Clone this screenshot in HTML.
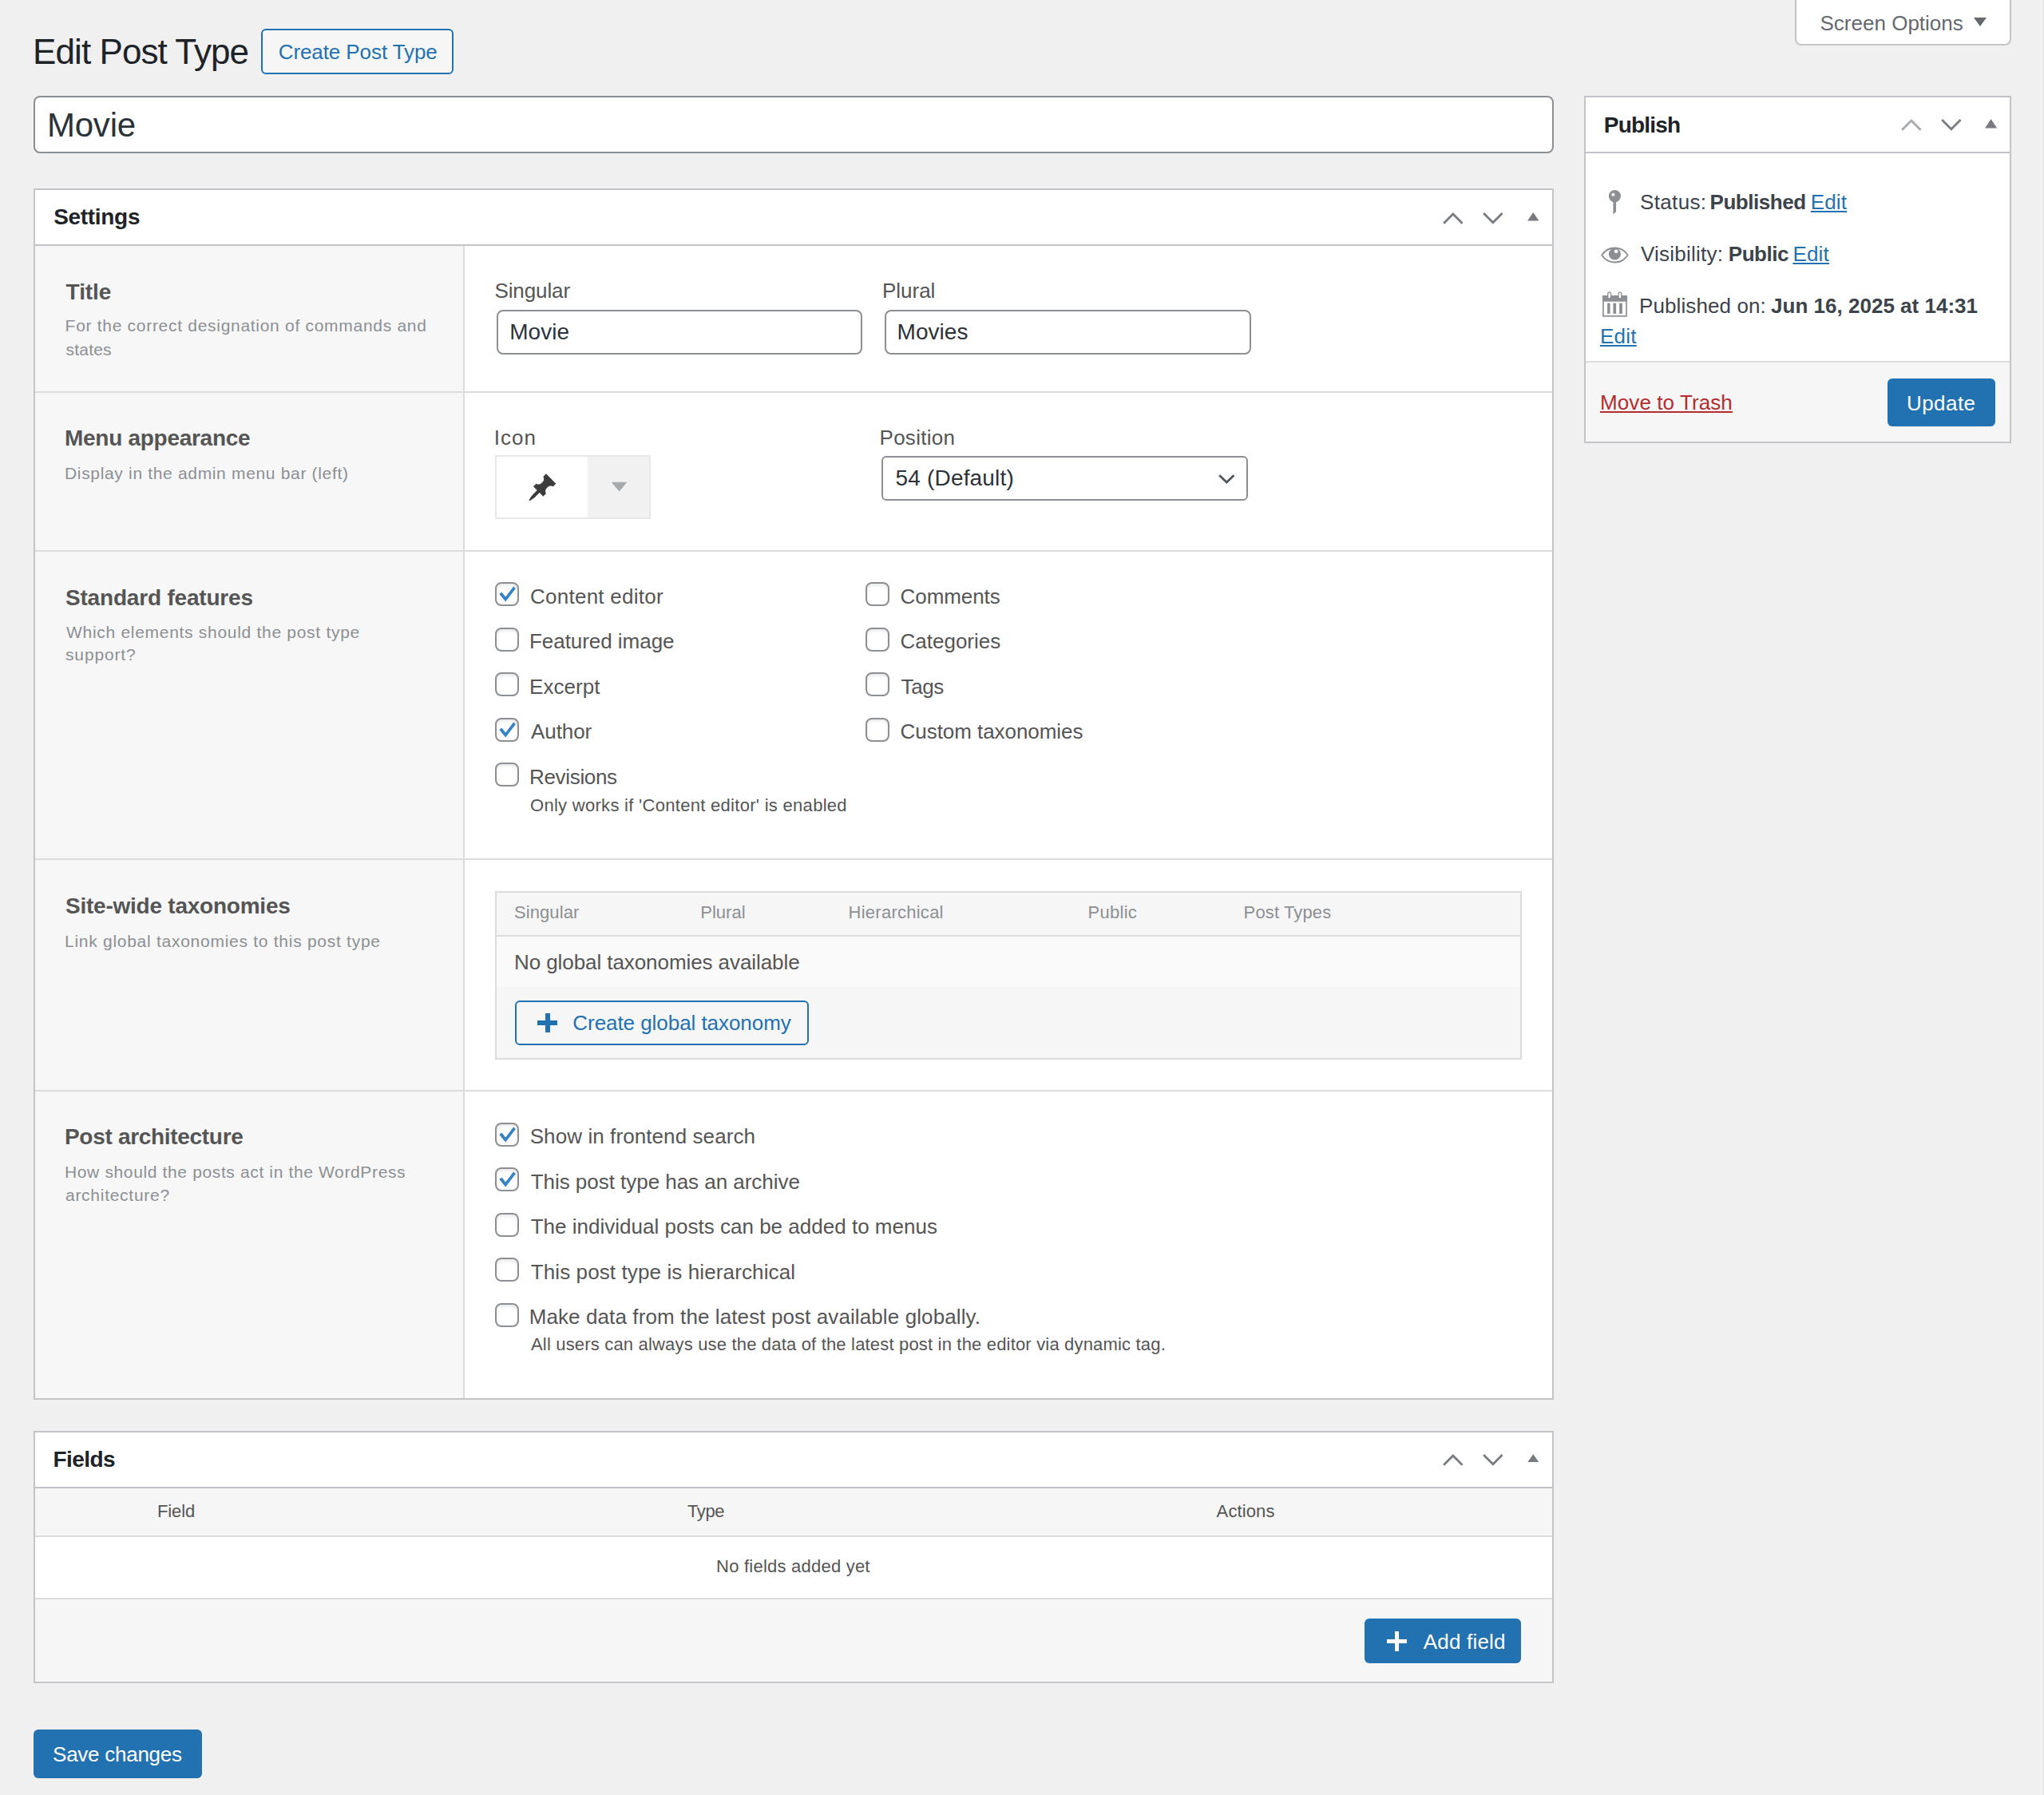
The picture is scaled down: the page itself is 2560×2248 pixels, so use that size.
<!DOCTYPE html>
<html><head><meta charset="utf-8"><title>Edit Post Type</title>
<style>
html,body{margin:0;padding:0;}
body{width:2560px;height:2248px;background:#f0f0f1;position:relative;overflow:hidden;font-family:"Liberation Sans",sans-serif;}
.t{position:absolute;white-space:nowrap;line-height:1;}
.b{position:absolute;box-sizing:border-box;}
a{color:#2271b1;}
@media (max-width:1300px){body{zoom:0.5;}}
</style></head><body>
<div class="t" id="t0" style="left:41.10px;top:42.85px;font-size:44px;color:#1d2327;font-weight:400;letter-spacing:-0.925px;">Edit Post Type</div>
<div class="b" style="left:327px;top:36px;width:241px;height:57px;border:2px solid #2271b1;border-radius:6px;background:#f6f6f6;"></div>
<div class="t" id="t1" style="left:348.70px;top:52.29px;font-size:26px;color:#2271b1;font-weight:400;letter-spacing:-0.087px;">Create Post Type</div>
<div class="b" style="left:2248px;top:-10px;width:271px;height:67px;border:2px solid #c3c4c7;border-top:none;border-radius:0 0 8px 8px;background:#fff;"></div>
<div class="t" id="t2" style="left:2279.50px;top:15.59px;font-size:26px;color:#646970;font-weight:400;letter-spacing:0.006px;">Screen Options</div>
<svg class="b" style="left:2470px;top:20px" width="20" height="16" viewBox="0 0 20 16"><path d="M2 2 L18 2 L10 13 Z" fill="#646970"/></svg>
<div class="b" style="left:42px;top:120px;width:1904px;height:72px;border:2px solid #8c8f94;border-radius:8px;background:#fff;"></div>
<div class="t" id="t3" style="left:59.00px;top:136.24px;font-size:42px;color:#2c3338;font-weight:400;letter-spacing:-0.239px;">Movie</div>
<div class="b" style="left:42px;top:236px;width:1904px;height:1517px;border:2px solid #c3c4c7;background:#fff;"></div>
<div class="b" style="left:44px;top:306px;width:1900px;height:2px;background:#c3c4c7;"></div>
<div class="t" id="t4" style="left:67.20px;top:258.29px;font-size:28px;color:#1d2327;font-weight:700;letter-spacing:-0.309px;">Settings</div>
<svg class="b" style="left:1807px;top:266.3px" width="26" height="15" viewBox="0 0 26 15"><path d="M1.15 13.7 L12.85 2 L24.55 13.7" stroke="#787c82" stroke-width="2.8" fill="none"/></svg>
<svg class="b" style="left:1856.6px;top:266.3px" width="26" height="15" viewBox="0 0 26 15"><path d="M1.15 1 L12.85 12.7 L24.55 1" stroke="#787c82" stroke-width="2.8" fill="none"/></svg>
<svg class="b" style="left:1912.8px;top:266.3px" width="14.5" height="10.6" viewBox="0 0 14.5 10.6"><path d="M0 10.6 L14.5 10.6 L7.25 0 Z" fill="#787c82"/></svg>
<div class="b" style="left:44px;top:308px;width:536px;height:1443px;background:#f7f7f7;"></div>
<div class="b" style="left:580px;top:308px;width:2px;height:1443px;background:#dcdcde;"></div>
<div class="b" style="left:44px;top:490px;width:1900px;height:2px;background:#dcdcde;"></div>
<div class="b" style="left:44px;top:689px;width:1900px;height:2px;background:#dcdcde;"></div>
<div class="b" style="left:44px;top:1075px;width:1900px;height:2px;background:#dcdcde;"></div>
<div class="b" style="left:44px;top:1365px;width:1900px;height:2px;background:#dcdcde;"></div>
<div class="t" id="t5" style="left:82.60px;top:351.79px;font-size:28px;color:#555555;font-weight:700;letter-spacing:-0.066px;">Title</div>
<div class="t" id="t6" style="left:81.60px;top:397.42px;font-size:21px;color:#8c8f94;font-weight:400;letter-spacing:0.708px;">For the correct designation of commands and</div>
<div class="t" id="t7" style="left:82.60px;top:427.12px;font-size:21px;color:#8c8f94;font-weight:400;letter-spacing:0.174px;">states</div>
<div class="t" id="t8" style="left:619.40px;top:350.99px;font-size:26px;color:#555555;font-weight:400;letter-spacing:-0.099px;">Singular</div>
<div class="t" id="t9" style="left:1105.00px;top:350.99px;font-size:26px;color:#555555;font-weight:400;letter-spacing:-0.016px;">Plural</div>
<div class="b" style="left:622px;top:388px;width:458px;height:56px;border:2px solid #8c8f94;border-radius:8px;background:#fff;"></div>
<div class="t" id="t10" style="left:638.20px;top:401.89px;font-size:28px;color:#2c3338;font-weight:400;letter-spacing:0.024px;">Movie</div>
<div class="b" style="left:1108px;top:388px;width:459px;height:56px;border:2px solid #8c8f94;border-radius:8px;background:#fff;"></div>
<div class="t" id="t11" style="left:1123.60px;top:401.89px;font-size:28px;color:#2c3338;font-weight:400;letter-spacing:0.039px;">Movies</div>
<div class="t" id="t12" style="left:81.00px;top:535.49px;font-size:28px;color:#555555;font-weight:700;letter-spacing:-0.280px;">Menu appearance</div>
<div class="t" id="t13" style="left:81.00px;top:581.82px;font-size:21px;color:#8c8f94;font-weight:400;letter-spacing:0.669px;">Display in the admin menu bar (left)</div>
<div class="t" id="t14" style="left:618.80px;top:534.79px;font-size:26px;color:#555555;font-weight:400;letter-spacing:1.020px;">Icon</div>
<div class="b" style="left:620px;top:570px;width:118px;height:80px;border:2px solid #e8e8e8;border-right:2px solid #e8e8e8;background:#fff;"></div>
<div class="b" style="left:736px;top:570px;width:79px;height:80px;border:2px solid #e8e8e8;border-left:none;background:#f1f1f1;"></div>
<svg class="b" style="left:660px;top:591px" width="39" height="39" viewBox="0 0 20 20"><path fill="#3c3c3c" d="M10.44 3.02l1.82-1.82 6.36 6.35-1.83 1.82c-1.05-.68-2.48-.57-3.41.36l-.75.75c-.92.93-1.04 2.35-.35 3.41l-1.83 1.82-2.41-2.41-2.8 2.79c-.42.42-3.38 2.71-3.8 2.29s1.86-3.39 2.28-3.81l2.79-2.79L4.1 9.36l1.83-1.82c1.05.69 2.48.57 3.4-.36l.75-.75c.93-.92 1.05-2.35.36-3.41z"/></svg>
<svg class="b" style="left:766px;top:603px" width="20" height="14" viewBox="0 0 20 14"><path d="M0.6 1.2 L18.5 1.2 L9.55 12 Z" fill="#a7aaad" stroke="#a7aaad" stroke-width="1" stroke-linejoin="round"/></svg>
<div class="t" id="t15" style="left:1101.50px;top:534.79px;font-size:26px;color:#555555;font-weight:400;letter-spacing:0.285px;">Position</div>
<div class="b" style="left:1104px;top:571px;width:459px;height:56px;border:2px solid #8c8f94;border-radius:6px;background:#fff;"></div>
<div class="t" id="t16" style="left:1121.50px;top:584.59px;font-size:28px;color:#2c3338;font-weight:400;letter-spacing:0.182px;">54 (Default)</div>
<svg class="b" style="left:1526px;top:594px" width="21" height="12" viewBox="0 0 21 12"><path d="M1.2 1.2 L10.3 10 L19.4 1.2" stroke="#50575e" stroke-width="2.8" fill="none"/></svg>
<div class="t" id="t17" style="left:82.00px;top:734.59px;font-size:28px;color:#555555;font-weight:700;letter-spacing:-0.193px;">Standard features</div>
<div class="t" id="t18" style="left:83.00px;top:780.92px;font-size:21px;color:#8c8f94;font-weight:400;letter-spacing:0.706px;">Which elements should the post type</div>
<div class="t" id="t19" style="left:82.00px;top:809.42px;font-size:21px;color:#8c8f94;font-weight:400;letter-spacing:0.853px;">support?</div>
<div class="b" style="left:620px;top:729.25px;width:30px;height:30.0px;border:2px solid #8c8f94;border-radius:8px;background:#fff;box-shadow:inset 0 2px 4px rgba(0,0,0,.1);"></div>
<svg class="b" style="left:620px;top:729.25px" width="30" height="30" viewBox="0 0 30 30"><path d="M5.3 14.9 L8.4 12.4 L13.2 18.4 L23.1 5.6 L25.9 8.1 L13.2 24.4 Z" fill="#3582c4"/></svg>
<div class="t" id="t20" style="left:664.00px;top:733.94px;font-size:26px;color:#555555;font-weight:400;letter-spacing:0.251px;">Content editor</div>
<div class="b" style="left:620px;top:785.71px;width:30px;height:30.0px;border:2px solid #8c8f94;border-radius:8px;background:#fff;box-shadow:inset 0 2px 4px rgba(0,0,0,.1);"></div>
<div class="t" id="t21" style="left:663.00px;top:790.40px;font-size:26px;color:#555555;font-weight:400;letter-spacing:-0.046px;">Featured image</div>
<div class="b" style="left:620px;top:842.17px;width:30px;height:30.0px;border:2px solid #8c8f94;border-radius:8px;background:#fff;box-shadow:inset 0 2px 4px rgba(0,0,0,.1);"></div>
<div class="t" id="t22" style="left:663.00px;top:846.86px;font-size:26px;color:#555555;font-weight:400;letter-spacing:0.060px;">Excerpt</div>
<div class="b" style="left:620px;top:898.63px;width:30px;height:30.0px;border:2px solid #8c8f94;border-radius:8px;background:#fff;box-shadow:inset 0 2px 4px rgba(0,0,0,.1);"></div>
<svg class="b" style="left:620px;top:898.63px" width="30" height="30" viewBox="0 0 30 30"><path d="M5.3 14.9 L8.4 12.4 L13.2 18.4 L23.1 5.6 L25.9 8.1 L13.2 24.4 Z" fill="#3582c4"/></svg>
<div class="t" id="t23" style="left:665.00px;top:903.32px;font-size:26px;color:#555555;font-weight:400;letter-spacing:-0.079px;">Author</div>
<div class="b" style="left:620px;top:955.09px;width:30px;height:30.0px;border:2px solid #8c8f94;border-radius:8px;background:#fff;box-shadow:inset 0 2px 4px rgba(0,0,0,.1);"></div>
<div class="t" id="t24" style="left:663.00px;top:959.78px;font-size:26px;color:#555555;font-weight:400;letter-spacing:-0.326px;">Revisions</div>
<div class="b" style="left:1084px;top:729.25px;width:30px;height:30.0px;border:2px solid #8c8f94;border-radius:8px;background:#fff;box-shadow:inset 0 2px 4px rgba(0,0,0,.1);"></div>
<div class="t" id="t25" style="left:1127.60px;top:733.94px;font-size:26px;color:#555555;font-weight:400;letter-spacing:-0.087px;">Comments</div>
<div class="b" style="left:1084px;top:785.71px;width:30px;height:30.0px;border:2px solid #8c8f94;border-radius:8px;background:#fff;box-shadow:inset 0 2px 4px rgba(0,0,0,.1);"></div>
<div class="t" id="t26" style="left:1127.60px;top:790.40px;font-size:26px;color:#555555;font-weight:400;letter-spacing:-0.015px;">Categories</div>
<div class="b" style="left:1084px;top:842.17px;width:30px;height:30.0px;border:2px solid #8c8f94;border-radius:8px;background:#fff;box-shadow:inset 0 2px 4px rgba(0,0,0,.1);"></div>
<div class="t" id="t27" style="left:1128.60px;top:846.86px;font-size:26px;color:#555555;font-weight:400;letter-spacing:-0.437px;">Tags</div>
<div class="b" style="left:1084px;top:898.63px;width:30px;height:30.0px;border:2px solid #8c8f94;border-radius:8px;background:#fff;box-shadow:inset 0 2px 4px rgba(0,0,0,.1);"></div>
<div class="t" id="t28" style="left:1127.60px;top:903.32px;font-size:26px;color:#555555;font-weight:400;letter-spacing:-0.060px;">Custom taxonomies</div>
<div class="t" id="t29" style="left:664.00px;top:998.07px;font-size:22px;color:#555555;font-weight:400;letter-spacing:0.289px;">Only works if 'Content editor' is enabled</div>
<div class="t" id="t30" style="left:82.00px;top:1121.09px;font-size:28px;color:#555555;font-weight:700;letter-spacing:-0.237px;">Site-wide taxonomies</div>
<div class="t" id="t31" style="left:81.00px;top:1167.82px;font-size:21px;color:#8c8f94;font-weight:400;letter-spacing:0.729px;">Link global taxonomies to this post type</div>
<div class="b" style="left:620px;top:1116px;width:1286px;height:211px;border:2px solid #dcdcde;background:#f6f6f6;"></div>
<div class="b" style="left:622px;top:1171px;width:1282px;height:2px;background:#dcdcde;"></div>
<div class="b" style="left:622px;top:1173px;width:1282px;height:63px;background:#fafafa;"></div>
<div class="t" id="t32" style="left:643.90px;top:1132.27px;font-size:22px;color:#8c8f94;font-weight:400;letter-spacing:0.112px;">Singular</div>
<div class="t" id="t33" style="left:877.20px;top:1132.27px;font-size:22px;color:#8c8f94;font-weight:400;letter-spacing:0.029px;">Plural</div>
<div class="t" id="t34" style="left:1062.60px;top:1132.27px;font-size:22px;color:#8c8f94;font-weight:400;letter-spacing:0.251px;">Hierarchical</div>
<div class="t" id="t35" style="left:1362.50px;top:1132.27px;font-size:22px;color:#8c8f94;font-weight:400;letter-spacing:0.274px;">Public</div>
<div class="t" id="t36" style="left:1557.60px;top:1132.27px;font-size:22px;color:#8c8f94;font-weight:400;letter-spacing:0.129px;">Post Types</div>
<div class="t" id="t37" style="left:644.00px;top:1191.69px;font-size:26px;color:#555555;font-weight:400;letter-spacing:-0.079px;">No global taxonomies available</div>
<div class="b" style="left:645px;top:1253px;width:368px;height:56px;border:2px solid #2271b1;border-radius:6px;background:#f6f6f6;"></div>
<div class="b" style="left:673px;top:1278px;width:25px;height:6px;background:#2271b1;"></div>
<div class="b" style="left:683px;top:1269px;width:6px;height:24px;background:#2271b1;"></div>
<div class="t" id="t38" style="left:717.30px;top:1268.29px;font-size:26px;color:#2271b1;font-weight:400;letter-spacing:-0.053px;">Create global taxonomy</div>
<div class="t" id="t39" style="left:81.00px;top:1410.29px;font-size:28px;color:#555555;font-weight:700;letter-spacing:-0.308px;">Post architecture</div>
<div class="t" id="t40" style="left:81.00px;top:1456.52px;font-size:21px;color:#8c8f94;font-weight:400;letter-spacing:0.636px;">How should the posts act in the WordPress</div>
<div class="t" id="t41" style="left:82.00px;top:1485.82px;font-size:21px;color:#8c8f94;font-weight:400;letter-spacing:0.725px;">architecture?</div>
<div class="b" style="left:620px;top:1405.5px;width:30px;height:30.0px;border:2px solid #8c8f94;border-radius:8px;background:#fff;box-shadow:inset 0 2px 4px rgba(0,0,0,.1);"></div>
<svg class="b" style="left:620px;top:1405.5px" width="30" height="30" viewBox="0 0 30 30"><path d="M5.3 14.9 L8.4 12.4 L13.2 18.4 L23.1 5.6 L25.9 8.1 L13.2 24.4 Z" fill="#3582c4"/></svg>
<div class="t" id="t42" style="left:663.70px;top:1409.99px;font-size:26px;color:#555555;font-weight:400;letter-spacing:0.087px;">Show in frontend search</div>
<div class="b" style="left:620px;top:1462.1px;width:30px;height:30.0px;border:2px solid #8c8f94;border-radius:8px;background:#fff;box-shadow:inset 0 2px 4px rgba(0,0,0,.1);"></div>
<svg class="b" style="left:620px;top:1462.1px" width="30" height="30" viewBox="0 0 30 30"><path d="M5.3 14.9 L8.4 12.4 L13.2 18.4 L23.1 5.6 L25.9 8.1 L13.2 24.4 Z" fill="#3582c4"/></svg>
<div class="t" id="t43" style="left:664.70px;top:1466.59px;font-size:26px;color:#555555;font-weight:400;letter-spacing:-0.035px;">This post type has an archive</div>
<div class="b" style="left:620px;top:1518.7px;width:30px;height:30.0px;border:2px solid #8c8f94;border-radius:8px;background:#fff;box-shadow:inset 0 2px 4px rgba(0,0,0,.1);"></div>
<div class="t" id="t44" style="left:664.70px;top:1523.19px;font-size:26px;color:#555555;font-weight:400;letter-spacing:0.011px;">The individual posts can be added to menus</div>
<div class="b" style="left:620px;top:1575.3px;width:30px;height:30.0px;border:2px solid #8c8f94;border-radius:8px;background:#fff;box-shadow:inset 0 2px 4px rgba(0,0,0,.1);"></div>
<div class="t" id="t45" style="left:664.70px;top:1579.79px;font-size:26px;color:#555555;font-weight:400;letter-spacing:0.113px;">This post type is hierarchical</div>
<div class="b" style="left:620px;top:1631.9px;width:30px;height:30.0px;border:2px solid #8c8f94;border-radius:8px;background:#fff;box-shadow:inset 0 2px 4px rgba(0,0,0,.1);"></div>
<div class="t" id="t46" style="left:662.70px;top:1636.39px;font-size:26px;color:#555555;font-weight:400;letter-spacing:0.101px;">Make data from the latest post available globally.</div>
<div class="t" id="t47" style="left:665.00px;top:1672.87px;font-size:22px;color:#555555;font-weight:400;letter-spacing:0.178px;">All users can always use the data of the latest post in the editor via dynamic tag.</div>
<div class="b" style="left:42px;top:1792px;width:1904px;height:316px;border:2px solid #c3c4c7;background:#fff;"></div>
<div class="b" style="left:44px;top:1862px;width:1900px;height:2px;background:#c3c4c7;"></div>
<div class="t" id="t48" style="left:66.50px;top:1814.29px;font-size:28px;color:#1d2327;font-weight:700;letter-spacing:-0.564px;">Fields</div>
<svg class="b" style="left:1807px;top:1820.5px" width="26" height="15" viewBox="0 0 26 15"><path d="M1.15 13.7 L12.85 2 L24.55 13.7" stroke="#787c82" stroke-width="2.8" fill="none"/></svg>
<svg class="b" style="left:1856.6px;top:1820.5px" width="26" height="15" viewBox="0 0 26 15"><path d="M1.15 1 L12.85 12.7 L24.55 1" stroke="#787c82" stroke-width="2.8" fill="none"/></svg>
<svg class="b" style="left:1912.8px;top:1820.5px" width="14.5" height="10.6" viewBox="0 0 14.5 10.6"><path d="M0 10.6 L14.5 10.6 L7.25 0 Z" fill="#787c82"/></svg>
<div class="b" style="left:44px;top:1864px;width:1900px;height:59px;background:#f6f6f6;"></div>
<div class="b" style="left:44px;top:1923px;width:1900px;height:2px;background:#dcdcde;"></div>
<div class="b" style="left:44px;top:2001px;width:1900px;height:2px;background:#dcdcde;"></div>
<div class="b" style="left:44px;top:2003px;width:1900px;height:103px;background:#f6f6f6;"></div>
<div class="t" id="t49" style="left:196.90px;top:1882.17px;font-size:22px;color:#555555;font-weight:400;letter-spacing:-0.099px;">Field</div>
<div class="t" id="t50" style="left:860.90px;top:1882.17px;font-size:22px;color:#555555;font-weight:400;letter-spacing:-0.332px;">Type</div>
<div class="t" id="t51" style="left:1523.60px;top:1882.17px;font-size:22px;color:#555555;font-weight:400;letter-spacing:0.110px;">Actions</div>
<div class="t" id="t52" style="left:897.10px;top:1951.17px;font-size:22px;color:#555555;font-weight:400;letter-spacing:0.225px;">No fields added yet</div>
<div class="b" style="left:1709px;top:2027px;width:196px;height:56px;background:#2271b1;border-radius:6px;"></div>
<div class="b" style="left:1737px;top:2052.5px;width:25px;height:5.0px;background:#fff;"></div>
<div class="b" style="left:1747px;top:2042.5px;width:5px;height:25.0px;background:#fff;"></div>
<div class="t" id="t53" style="left:1782.70px;top:2042.79px;font-size:26px;color:#fff;font-weight:400;letter-spacing:0.201px;">Add field</div>
<div class="b" style="left:42px;top:2166px;width:211px;height:61px;background:#2271b1;border-radius:6px;"></div>
<div class="t" id="t54" style="left:66.10px;top:2183.99px;font-size:26px;color:#fff;font-weight:400;letter-spacing:-0.263px;">Save changes</div>
<div class="b" style="left:1984px;top:120px;width:535px;height:435px;border:2px solid #c3c4c7;background:#fff;"></div>
<div class="b" style="left:1986px;top:190px;width:531px;height:2px;background:#c3c4c7;"></div>
<div class="t" id="t55" style="left:2008.80px;top:143.29px;font-size:28px;color:#1d2327;font-weight:700;letter-spacing:-0.818px;">Publish</div>
<svg class="b" style="left:2381px;top:149.3px" width="26" height="15" viewBox="0 0 26 15"><path d="M1.15 13.7 L12.85 2 L24.55 13.7" stroke="#a7aaad" stroke-width="2.8" fill="none"/></svg>
<svg class="b" style="left:2430.5px;top:149.3px" width="26" height="15" viewBox="0 0 26 15"><path d="M1.15 1 L12.85 12.7 L24.55 1" stroke="#787c82" stroke-width="2.8" fill="none"/></svg>
<svg class="b" style="left:2486.3px;top:149.3px" width="15.1" height="11.4" viewBox="0 0 15.1 11.4"><path d="M0 11.4 L15.1 11.4 L7.55 0 Z" fill="#787c82"/></svg>
<div class="b" style="left:1986px;top:453px;width:531px;height:100px;background:#f6f6f6;"></div>
<div class="b" style="left:1986px;top:452px;width:531px;height:2px;background:#dcdcde;"></div>
<svg class="b" style="left:2000px;top:230px" width="50" height="170" viewBox="2000 230 50 170"><circle cx="2022.4" cy="245.6" r="7.6" fill="#8c8f94"/><circle cx="2020.4" cy="243.7" r="2" fill="#fff"/><path d="M2020.4 252 L2024.1 252 L2024.1 265 L2020.4 268.4 Z" fill="#8c8f94"/><path d="M2006.2 319.5 C2014 307.5 2031 307.5 2038.6 319.5 C2031 331.5 2014 331.5 2006.2 319.5 Z" stroke="#8c8f94" stroke-width="1.9" fill="none"/><circle cx="2022.4" cy="318" r="7.6" fill="#8c8f94"/><circle cx="2024.1" cy="314.8" r="2.3" fill="#fff"/><rect x="2007.95" y="370.85" width="29.1" height="25" stroke="#8c8f94" stroke-width="1.7" fill="none"/><rect x="2007.1" y="370" width="30.8" height="7.7" fill="#8c8f94"/><rect x="2013.8" y="365.9" width="3.8" height="8" rx="1.9" fill="#fff" stroke="#8c8f94" stroke-width="1.3"/><rect x="2027" y="365.9" width="3.8" height="8" rx="1.9" fill="#fff" stroke="#8c8f94" stroke-width="1.3"/><rect x="2013.1" y="379.6" width="3.5" height="13.3" fill="#8c8f94"/><rect x="2020.4" y="379.6" width="3.7" height="13.3" fill="#8c8f94"/><rect x="2028.1" y="379.6" width="3.8" height="13.3" fill="#8c8f94"/></svg>
<div class="t" id="t56" style="left:2054.00px;top:239.99px;font-size:26px;color:#3c434a;font-weight:400;letter-spacing:0.360px;">Status:</div>
<div class="t" id="t57" style="left:2141.50px;top:239.99px;font-size:26px;color:#3c434a;font-weight:700;letter-spacing:-0.466px;">Published</div>
<div class="t" id="t58" style="left:2267.80px;top:239.99px;font-size:26px;color:#2271b1;font-weight:400;letter-spacing:0.134px;text-decoration:underline;">Edit</div>
<div class="t" id="t59" style="left:2055.00px;top:305.19px;font-size:26px;color:#3c434a;font-weight:400;letter-spacing:0.233px;">Visibility:</div>
<div class="t" id="t60" style="left:2164.80px;top:305.19px;font-size:26px;color:#3c434a;font-weight:700;letter-spacing:-0.465px;">Public</div>
<div class="t" id="t61" style="left:2245.40px;top:305.19px;font-size:26px;color:#2271b1;font-weight:400;letter-spacing:0.201px;text-decoration:underline;">Edit</div>
<div class="t" id="t62" style="left:2053.00px;top:369.59px;font-size:26px;color:#3c434a;font-weight:400;letter-spacing:0.103px;">Published on:</div>
<div class="t" id="t63" style="left:2218.10px;top:369.59px;font-size:26px;color:#3c434a;font-weight:700;letter-spacing:0.009px;">Jun 16, 2025 at 14:31</div>
<div class="t" id="t64" style="left:2004.00px;top:408.29px;font-size:26px;color:#2271b1;font-weight:400;letter-spacing:0.234px;text-decoration:underline;">Edit</div>
<div class="t" id="t65" style="left:2004.00px;top:490.99px;font-size:26px;color:#b32d2e;font-weight:400;letter-spacing:0.089px;text-decoration:underline;">Move to Trash</div>
<div class="b" style="left:2364px;top:474px;width:135px;height:60px;background:#2271b1;border-radius:6px;"></div>
<div class="t" id="t66" style="left:2388.00px;top:491.59px;font-size:26px;color:#fff;font-weight:400;letter-spacing:0.430px;">Update</div>
<div class="b" style="left:2555px;top:0px;width:3px;height:2248px;background:#f3f3f3;"></div>
<div class="b" style="left:2558px;top:0px;width:2px;height:2248px;background:#e6e7e8;"></div>
</body></html>
